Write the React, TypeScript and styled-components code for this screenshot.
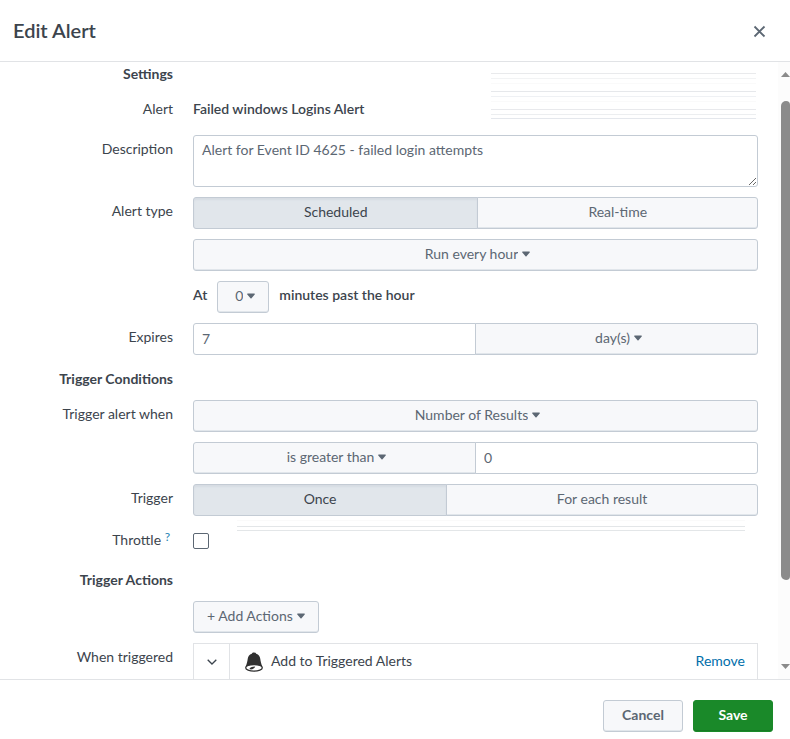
import React from "react";
import styled, { createGlobalStyle, css } from "styled-components";

const GlobalStyle = createGlobalStyle`
  *, *::before, *::after { box-sizing: border-box; }
  body { margin: 0; background: #fff; }
  body, button, input, select, textarea {
    font-family: Lato, "Open Sans", sans-serif;
    font-size: 14px;
    line-height: 20px;
    color: #3c444d;
  }
`;

const Dialog = styled.form`
  display: flex;
  flex-direction: column;
  height: 100vh;
  min-height: 400px;
`;

const Header = styled.header`
  display: flex;
  align-items: center;
  justify-content: space-between;
  padding: 16px 24px 15px 13px;
  border-bottom: 1px solid #e1e3e6;
`;

const Title = styled.h1`
  margin: 0;
  padding-bottom: 2px;
  font-size: 20px;
  line-height: 28px;
  font-weight: 600;
`;

const CloseButton = styled.button`
  display: flex;
  padding: 0;
  border: 0;
  background: none;
  color: #5c6773;
`;

const Body = styled.div`
  display: flex;
  flex: 1;
  min-height: 0;
`;

const Content = styled.main`
  display: flex;
  flex-direction: column;
  gap: 10px;
  flex: 1;
  min-width: 0;
  overflow: hidden;
  padding-right: 20px;
`;

const TopBlock = styled.div`
  display: flex;
  justify-content: space-between;
`;

const TopRows = styled.div`
  display: flex;
  flex-direction: column;
  gap: 10px;
`;

const Heading = styled.h2<{ $first?: boolean }>`
  width: 173px;
  flex: none;
  margin: 0;
  padding: ${(p) => (p.$first ? 3 : 5)}px 0 2px;
  font-size: 14px;
  line-height: 18px;
  font-weight: 700;
  text-align: right;
`;

const Row = styled.div`
  display: grid;
  grid-template-columns: 173px minmax(0, 1fr);
  column-gap: 20px;
  flex: none;
  min-height: 30px;
`;

const Label = styled.label`
  padding-top: 4px;
  text-align: right;
`;

const Help = styled.a`
  margin-right: 3px;
  font-size: 12px;
  line-height: 1;
  vertical-align: 4px;
  color: #1e84b4;
  text-decoration: none;
`;

const Value = styled.span`
  padding-top: 4px;
  font-weight: 600;
`;

const Lines = styled.div`
  width: 265px;
  height: 46px;
  margin: 11px 2px 0 0;
  display: flex;
  flex-direction: column;
`;

const Line = styled.div<{ $color: string; $space: number }>`
  height: 1px;
  flex: none;
  margin-bottom: ${(p) => p.$space}px;
  background: ${(p) => p.$color};
`;

const ThrottleField = styled.div`
  display: flex;
  align-items: flex-start;
  gap: 28px;
`;

const DoubleLine = styled.div`
  flex: 1;
  height: 5px;
  margin-right: 13px;
  border: solid #e3e6e8;
  border-width: 1px 0;
  box-shadow: 0 -5px 0 #fff, 0 -6px 0 #fafafa;
`;

const surface = css`
  height: 32px;
  border: 1px solid #c3cbd4;
  border-radius: 3px;
  background: #f7f8fa;
  color: #5c6773;
  box-shadow: inset 0 -1px 0 #e1e6eb;
`;

const Button = styled.button<{ $kind?: "strong" | "primary" }>`
  ${surface}
  padding: 0 13px 2px;
  display: inline-flex;
  align-items: center;
  justify-content: center;
  gap: 4px;
  ${(p) =>
    p.$kind &&
    css`
      width: 80px;
      font-weight: 700;
    `}
  ${(p) =>
    p.$kind === "primary" &&
    css`
      border-color: #1a8929;
      background: #1a8929;
      color: #fff;
      box-shadow: inset 0 -1px 0 #177a25;
    `}
`;

const Joined = styled.div<{ $equal?: boolean }>`
  display: flex;
  & > * {
    flex: ${(p) => (p.$equal ? "1 1 50%" : "1 1 auto")};
    min-width: 0;
  }
  & > :first-child {
    border-top-right-radius: 0;
    border-bottom-right-radius: 0;
  }
  & > :last-child {
    margin-left: -1px;
    border-top-left-radius: 0;
    border-bottom-left-radius: 0;
  }
`;

const Segment = styled.button<{ $on?: boolean }>`
  ${surface}
  padding: 0 14px 2px;
  ${(p) =>
    p.$on &&
    css`
      background: #e1e6eb;
      color: #3c444d;
      box-shadow: inset 0 2px 2px #d6dce3;
    `}
`;

const Picker = styled.span<{ $small?: boolean }>`
  ${surface}
  display: flex;
  align-items: center;
  justify-content: center;
  gap: 4px;
  padding: 0 0 2px 4px;
  width: ${(p) => (p.$small ? "52px" : "auto")};
`;

const PickerSelect = styled.select`
  appearance: none;
  field-sizing: content;
  padding: 0;
  border: 0;
  background: none;
  color: inherit;
`;

const Input = styled.input`
  height: 32px;
  padding: 0 8px 2px;
  border: 1px solid #c3cbd4;
  border-radius: 3px;
  background: #fff;
  color: #5c6773;
`;

const TextArea = styled.textarea`
  display: block;
  width: 100%;
  height: 52px;
  padding: 4px 8px;
  border: 1px solid #c3cbd4;
  border-radius: 3px;
  color: #5c6773;
  resize: vertical;
`;

const Minutes = styled.div`
  display: flex;
  gap: 10px;
`;

const Checkbox = styled.input`
  appearance: none;
  width: 16px;
  height: 16px;
  margin: 7px 0 0;
  border: 1px solid #5c6773;
  border-radius: 2px;
  background: #fff;
  &:checked { background: #5c6773; }
`;

const ActionItem = styled.div`
  display: flex;
  align-items: center;
  height: 37px;
  border: 1px solid #e1e3e6;
`;

const Expand = styled.button`
  display: flex;
  align-items: center;
  justify-content: center;
  align-self: stretch;
  width: 36px;
  margin-right: 15px;
  padding: 0;
  border: 0;
  border-right: 1px solid #e1e3e6;
  background: none;
`;

const ActionName = styled.span`
  flex: 1;
  margin-left: 8px;
  padding-bottom: 1px;
`;

const RemoveLink = styled.a`
  margin-right: 12px;
  padding-bottom: 1px;
  color: #006eaa;
  text-decoration: none;
`;

const Scrollbar = styled.div`
  display: flex;
  flex-direction: column;
  align-items: flex-end;
  width: 12px;
  padding: 10px 0;
  background: #fcfcfc;
`;

const Track = styled.div`
  flex: 1;
  width: 9px;
  padding: 24px 0 84px;
`;

const Thumb = styled.div`
  height: 100%;
  border-radius: 5px 4px 4px 5px;
  background: #8b8b8b;
`;

const Footer = styled.footer`
  display: flex;
  justify-content: flex-end;
  gap: 10px;
  padding: 20px 17px 7px;
  border-top: 1px solid #e1e3e6;
`;

const Caret = () => (
  <svg width="8" height="6" viewBox="0 0 8 6" aria-hidden="true">
    <path d="M.7.5h6.600c.5 0 .8.5.4.9L4.500 5.200q-.5.5-1 0L.3 1.400C-.1 1 .2.5.7.5Z" fill="#5c6773" />
  </svg>
);

const Bell = () => (
  <svg width="18" height="22" viewBox="0 0 18 22" aria-hidden="true">
    <path
      d="M9 1.500c1.200 0 1.900.5 2.200 1.300 2.600.8 3.800 2.700 4.100 5.200.3 2.600.8 4.400 2 7.500H.7c1.200-3.100 1.700-4.900 2-7.500.3-2.500 1.500-4.400 4.100-5.200C7.100 2 7.800 1.500 9 1.500Z"
      fill="#303030"
    />
    <ellipse cx="9" cy="16.800" rx="8.300" ry="3.300" fill="#fff" stroke="#303030" strokeWidth="1.300" />
    <path d="M4.500 17.800c.3-1.500 2.200-2.200 5.700-2.400-.6 1.700-2.300 2.900-4.500 3.200Z" fill="#303030" />
  </svg>
);

const ScrollArrow = ({ down }: { down?: boolean }) => (
  <svg width="9" height="5" viewBox="0 0 9 5" aria-hidden="true">
    <path d={down ? "M0 0h9L4.500 5Z" : "M0 5h9L4.500 0Z"} fill="#8b8b8b" />
  </svg>
);

type DropdownProps = { id?: string; label: string; options: string[]; small?: boolean };

const Dropdown = ({ id, label, options, small }: DropdownProps) => (
  <Picker $small={small}>
    <PickerSelect id={id} aria-label={label}>
      {options.map((o) => (
        <option key={o}>{o}</option>
      ))}
    </PickerSelect>
    <Caret />
  </Picker>
);

const topLines: [string, number][] = [
  ["#e9eaec", 4], ["#f2f3f4", 4], ["#fafafa", 7],
  ["#e6e8eb", 4], ["#eff1f4", 4], ["#fafafa", 7],
  ["#e8e9ec", 4], ["#eceef0", 3], ["#e4e7ec", 0],
];

export default function App() {
  return (
    <>
      <GlobalStyle />
      <Dialog onSubmit={(e) => e.preventDefault()}>
        <Header>
          <Title>Edit Alert</Title>
          <CloseButton type="button" aria-label="Close">
            <svg width="13" height="13" viewBox="0 0 13 13" aria-hidden="true">
              <path d="M1.500 1.500l10 10M11.500 1.500l-10 10" stroke="currentColor" strokeWidth="1.800" />
            </svg>
          </CloseButton>
        </Header>
        <Body>
          <Content>
            <TopBlock>
              <TopRows>
                <Heading $first>Settings</Heading>
                <Row>
                  <Label as="span">Alert</Label>
                  <Value>Failed windows Logins Alert</Value>
                </Row>
              </TopRows>
              <Lines aria-hidden="true">
                {topLines.map(([color, space], i) => (
                  <Line key={i} $color={color} $space={space} />
                ))}
              </Lines>
            </TopBlock>
            <Row>
              <Label htmlFor="description">Description</Label>
              <TextArea id="description" defaultValue="Alert for Event ID 4625 - failed login attempts" />
            </Row>
            <Row>
              <Label as="span">Alert type</Label>
              <Joined role="group" aria-label="Alert type">
                <Segment type="button" $on aria-pressed="true">Scheduled</Segment>
                <Segment type="button" aria-pressed="false">Real-time</Segment>
              </Joined>
            </Row>
            <Row>
              <span />
              <Dropdown label="Schedule" options={["Run every hour", "Run every day", "Run every week"]} />
            </Row>
            <Row>
              <span />
              <Minutes>
                <Value>At</Value>
                <Dropdown small label="Minutes past the hour" options={["0", "15", "30", "45"]} />
                <Value>minutes past the hour</Value>
              </Minutes>
            </Row>
            <Row>
              <Label htmlFor="expires">Expires</Label>
              <Joined $equal>
                <Input id="expires" defaultValue="7" />
                <Dropdown label="Expiry unit" options={["day(s)", "hour(s)", "minute(s)"]} />
              </Joined>
            </Row>
            <Heading>Trigger Conditions</Heading>
            <Row>
              <Label htmlFor="condition">Trigger alert when</Label>
              <Dropdown id="condition" label="Trigger alert when" options={["Number of Results", "Number of Hosts"]} />
            </Row>
            <Row>
              <span />
              <Joined $equal>
                <Dropdown label="Comparison" options={["is greater than", "is less than", "is equal to"]} />
                <Input aria-label="Threshold" defaultValue="0" />
              </Joined>
            </Row>
            <Row>
              <Label as="span">Trigger</Label>
              <Joined role="group" aria-label="Trigger">
                <Segment type="button" $on aria-pressed="true">Once</Segment>
                <Segment type="button" aria-pressed="false">For each result</Segment>
              </Joined>
            </Row>
            <Row>
              <Label htmlFor="throttle">
                Throttle <Help href="#throttle">?</Help>
              </Label>
              <ThrottleField>
                <Checkbox id="throttle" type="checkbox" />
                <DoubleLine aria-hidden="true" />
              </ThrottleField>
            </Row>
            <Heading>Trigger Actions</Heading>
            <Row>
              <span />
              <div>
                <Button type="button" aria-haspopup="menu">
                  + Add Actions <Caret />
                </Button>
              </div>
            </Row>
            <Row>
              <Label as="span">When triggered</Label>
              <ActionItem>
                <Expand type="button" aria-label="Expand action">
                  <svg width="10" height="6" viewBox="0 0 10 6" aria-hidden="true">
                    <path d="M.7.7 5 5 9.300.7" fill="none" stroke="#3c444d" strokeWidth="1.300" />
                  </svg>
                </Expand>
                <Bell />
                <ActionName>Add to Triggered Alerts</ActionName>
                <RemoveLink href="#remove">Remove</RemoveLink>
              </ActionItem>
            </Row>
          </Content>
          <Scrollbar aria-hidden="true">
            <ScrollArrow />
            <Track>
              <Thumb />
            </Track>
            <ScrollArrow down />
          </Scrollbar>
        </Body>
        <Footer>
          <Button type="button" $kind="strong">Cancel</Button>
          <Button type="submit" $kind="primary">Save</Button>
        </Footer>
      </Dialog>
    </>
  );
}
